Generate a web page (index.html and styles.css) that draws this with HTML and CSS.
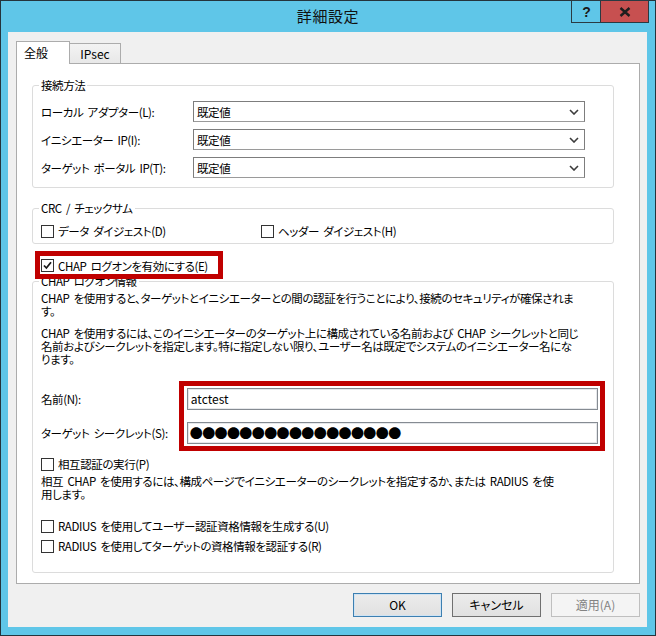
FILE: index.html
```html
<!DOCTYPE html>
<html lang="ja">
<head>
<meta charset="utf-8">
<title>詳細設定</title>
<link rel="stylesheet" href="styles.css">
</head>
<body>
<div class="window">
  <div class="titlebar">
    <span class="title">詳細設定</span>
    <div class="cap help">?</div>
    <div class="cap close">
      <svg width="12" height="10" viewBox="0 0 12 10"><path d="M1.5 1 L10.5 9 M10.5 1 L1.5 9" stroke="#1e1e1e" stroke-width="2.4" fill="none"/></svg>
    </div>
  </div>
  <div class="client">
    <div class="tabs">
      <div class="tab active">全般</div>
      <div class="tab">IPsec</div>
    </div>
    <div class="panel">
      <fieldset class="group g-conn">
        <legend>接続方法</legend>
        <div class="row">
          <span class="lbl">ローカル アダプター(L):</span>
          <div class="select"><span>既定値</span><svg width="10" height="6" viewBox="0 0 10 6"><path d="M1 1 L5 5 L9 1" stroke="#3c3c3c" stroke-width="1.6" fill="none"/></svg></div>
        </div>
        <div class="row">
          <span class="lbl">イニシエーター IP(I):</span>
          <div class="select"><span>既定値</span><svg width="10" height="6" viewBox="0 0 10 6"><path d="M1 1 L5 5 L9 1" stroke="#3c3c3c" stroke-width="1.6" fill="none"/></svg></div>
        </div>
        <div class="row">
          <span class="lbl">ターゲット ポータル IP(T):</span>
          <div class="select"><span>既定値</span><svg width="10" height="6" viewBox="0 0 10 6"><path d="M1 1 L5 5 L9 1" stroke="#3c3c3c" stroke-width="1.6" fill="none"/></svg></div>
        </div>
      </fieldset>

      <fieldset class="group g-crc">
        <legend>CRC / チェックサム</legend>
        <div class="crc-row">
          <div class="check c-data"><span class="cb"></span>データ ダイジェスト(D)</div>
          <div class="check"><span class="cb"></span>ヘッダー ダイジェスト(H)</div>
        </div>
      </fieldset>

      <div class="hl hl-chap">
        <div class="check"><span class="cb"><svg width="11" height="11" viewBox="0 0 11 11"><path d="M2 5.5 L4.4 8 L9 2.2" stroke="#1a1a1a" stroke-width="1.8" fill="none"/></svg></span>CHAP ログオンを有効にする(E)</div>
      </div>

      <fieldset class="group g-chap">
        <legend>CHAP ログオン情報</legend>
        <p class="txt p1">CHAP を使用すると、ターゲットとイニシエーターとの間の認証を行うことにより、接続のセキュリティが確保されま<br>す。</p>
        <p class="txt p2">CHAP を使用するには、このイニシエーターのターゲット上に構成されている名前および CHAP シークレットと同じ<br>名前およびシークレットを指定します。特に指定しない限り、ユーザー名は既定でシステムのイニシエーター名にな<br>ります。</p>
        <div class="cred">
          <div class="cred-labels">
            <span>名前(N):</span>
            <span>ターゲット シークレット(S):</span>
          </div>
          <div class="hl hl-cred">
            <div class="textbox">atctest</div>
            <div class="textbox dots">●●●●●●●●●●●●●●●●●</div>
          </div>
        </div>
        <div class="check c-mutual"><span class="cb"></span>相互認証の実行(P)</div>
        <p class="txt p3">相互 CHAP を使用するには、構成ページでイニシエーターのシークレットを指定するか、または RADIUS を使<br>用します。</p>
        <div class="check c-rad1"><span class="cb"></span>RADIUS を使用してユーザー認証資格情報を生成する(U)</div>
        <div class="check c-rad2"><span class="cb"></span>RADIUS を使用してターゲットの資格情報を認証する(R)</div>
      </fieldset>
    </div>
    <div class="buttons">
      <div class="btn default">OK</div>
      <div class="btn">キャンセル</div>
      <div class="btn disabled">適用(A)</div>
    </div>
  </div>
</div>
</body>
</html>
```

FILE: styles.css
```css
* { box-sizing: border-box; }
html, body { margin: 0; padding: 0; }
body {
  width: 656px;
  height: 636px;
  overflow: hidden;
  background: #ffffff;
  font-family: "Noto Sans CJK JP", "Noto Sans", sans-serif;
  font-size: 11.5px;
  letter-spacing: -0.4px;
  word-spacing: 2px;
  color: #000;
  font-feature-settings: "palt";
}

.window {
  width: 656px;
  height: 636px;
  border: 1px solid #24343c;
  background: #5fc6e8;
  display: flex;
  flex-direction: column;
}

.titlebar {
  position: relative;
  flex: none;
  height: 31px;
  display: flex;
  align-items: center;
  justify-content: center;
}
.title {
  font-size: 15px;
  letter-spacing: 0.6px;
  line-height: 18px;
  color: #111;
  margin-top: -1px;
}
.cap {
  position: absolute;
  top: -1px;
  height: 23px;
  border: 1px solid #2a3a42;
  display: flex;
  align-items: center;
  justify-content: center;
  letter-spacing: 0;
}
.help {
  left: 570px;
  width: 31px;
  background: #5fc6e8;
  font-family: "Liberation Sans", sans-serif;
  font-weight: bold;
  font-size: 14px;
  color: #1a1a1a;
}
.close {
  left: 599px;
  width: 49px;
  background: #c75050;
}

.client {
  flex: none;
  height: 595px;
  margin: 0 8px 0 7px;
  background: #f0f0f0;
  padding: 9px 7px 0 8px;
}

.tabs {
  display: flex;
  align-items: flex-end;
  height: 22px;
  font-size: 12px;
  letter-spacing: 0;
}
.tab {
  height: 20px;
  width: 52px;
  margin-left: -1px;
  border: 1px solid #acacac;
  border-bottom: none;
  background: linear-gradient(#f3f3f3, #e8e8e8);
  display: flex;
  align-items: center;
  justify-content: center;
  line-height: 14px;
  padding-top: 1px;
}
.tab.active {
  position: relative;
  z-index: 1;
  margin-left: 0;
  width: 54px;
  height: 23px;
  margin-bottom: -1px;
  background: #fff;
  justify-content: flex-start;
  padding-left: 7px;
  padding-top: 0;
  padding-bottom: 1px;
}

.panel {
  width: 624px;
  height: 521px;
  background: #fff;
  border: 1px solid #acacac;
  padding: 14px 0 0 15px;
}

.group {
  margin: 0;
  width: 582px;
  border: 1px solid #dcdcdc;
  border-radius: 3px;
  padding: 0 8px 0 8px;
  min-width: 0;
}
.group legend {
  padding: 0 2px;
  margin-left: -2px;
  line-height: 14px;
  height: 14px;
}

.g-conn { padding-top: 9px; padding-bottom: 9px; }
.row {
  display: flex;
  align-items: center;
  height: 21px;
}
.row + .row { margin-top: 7px; }
.lbl { width: 152px; flex: none; white-space: nowrap; }
.select {
  width: 392px;
  height: 21px;
  border: 1px solid #7d7d7d;
  border-bottom-color: #9a9a9a;
  background: #fff;
  display: flex;
  align-items: center;
  justify-content: space-between;
  padding: 0 5px 0 3px;
}

.g-crc { margin-top: 13px; padding-top: 8px; padding-bottom: 4px; }
.crc-row { display: flex; }
.c-data { width: 220px; }

.check {
  display: flex;
  align-items: center;
  height: 16px;
  gap: 4px;
  white-space: nowrap;
  line-height: 14px;
}
.cb {
  flex: none;
  width: 13px;
  height: 13px;
  border: 1px solid #333;
  background: #fff;
  display: flex;
  align-items: center;
  justify-content: center;
}

.hl {
  border: 5px solid #c00000;
}
.hl-chap {
  position: relative;
  z-index: 2;
  width: 188px;
  height: 28px;
  margin: 7px 0 0 3px;
  display: flex;
  align-items: center;
  padding: 1px 0 0 1px;
}

.g-chap {
  margin-top: -5px;
  padding-top: 2px;
  padding-bottom: 18px;
}
.txt {
  margin: 0;
  line-height: 13px;
  white-space: nowrap;
}
.p1 { margin-top: 2px; }
.p2 { margin-top: 9px; }

.cred {
  display: flex;
  margin-top: 15px;
  margin-left: -8px;
}
.cred-labels {
  width: 146px;
  padding: 7px 0 0 8px;
  display: flex;
  flex-direction: column;
  gap: 12px;
}
.cred-labels span {
  height: 22px;
  line-height: 22px;
  white-space: nowrap;
}
.hl-cred {
  width: 427px;
  padding: 2px 2px 2px 3px;
  display: flex;
  flex-direction: column;
  gap: 12px;
}
.textbox {
  height: 22px;
  border: 1px solid #858b92;
  box-shadow: inset 0 0 0 1px #e6e8eb;
  background: #fff;
  padding-left: 3px;
  line-height: 19px;
  font-size: 12px;
  letter-spacing: 0;
}
.dots {
  font-size: 13px;
  letter-spacing: -0.6px;
  line-height: 20px;
  padding-left: 2px;
}

.c-mutual { margin-top: 5px; }
.p3 { margin-top: 3px; }
.c-rad1 { margin-top: 17px; }
.c-rad2 { margin-top: 4px; }

.buttons {
  display: flex;
  justify-content: flex-end;
  gap: 10px;
  margin-top: 9px;
  font-size: 12px;
  letter-spacing: 0;
}
.btn {
  width: 89px;
  height: 24px;
  border: 1px solid #707070;
  background: linear-gradient(#ececec, #e1e1e1);
  display: flex;
  align-items: center;
  justify-content: center;
  line-height: 14px;
}
.btn.default {
  border-color: #3c7fb1;
  box-shadow: inset 0 0 0 1px #cfe3f3;
}
.btn.disabled {
  border-color: #bfbfbf;
  background: #f4f4f4;
  color: #838383;
}
```
